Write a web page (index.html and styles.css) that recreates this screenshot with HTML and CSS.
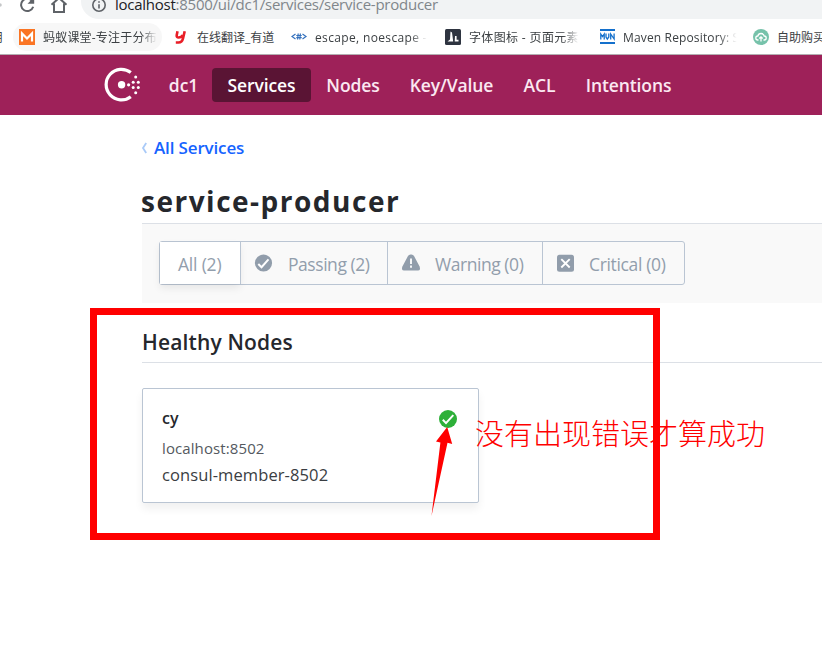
FILE: index.html
```html
<!DOCTYPE html>
<html lang="zh-CN">
<head>
<meta charset="utf-8">
<title>service-producer - Consul</title>
<link rel="stylesheet" href="styles.css">
</head>
<body>
<div class="toolbar">
  <svg class="tool-icons" width="81" height="19" viewBox="0 0 81 19" fill="none" stroke="#5f6368" stroke-width="2">
    <circle cx="0" cy="5" r="1.8" fill="#c4c6c8" stroke="none"/>
    <path d="M32.3 1.2A6.2 6.2 0 1 0 33.2 6.8"/><path d="M27.5 3.7h6.7V-3z" fill="#5f6368" stroke="none"/>
    <path d="M51.500 4.700L59-2l7.500 6.700M54 3.500V12h10V3.500"/>
  </svg>
  <div class="address">
    <svg width="14" height="19" viewBox="0 0 14 19" fill="none" stroke="#5f6368" stroke-width="1.600"><circle cx="7" cy="5" r="6.200"/><path d="M7 4.200V8.500M7 1.200V2.800"/></svg>
    <div class="url"><span class="host">localhost</span><span>:8500/ui/dc1/services/service-producer</span></div>
  </div>
</div>
<div class="bookmarks">
  <div class="bm edge"><span>用</span></div>
  <div class="bm ant">
    <svg width="16" height="16" viewBox="0 0 16 16"><path fill="#fa7524" d="M0 0h16v16H0z"/><path d="M3 12.500V4.500L8 9.500l5-5v8" fill="none" stroke="#fff" stroke-width="2.200"/></svg>
    <span class="fade">蚂蚁课堂-专注于分布</span>
  </div>
  <div class="bm youdao">
    <svg width="12" height="14" viewBox="0 0 12 14" fill="none" stroke="#e91e27" stroke-width="2.600"><path d="M2.500 1.300L1.700 5.300q-.2 2.200 1.800 2.200 3.200 0 4.300-2.500M9.700 1.300L8 8.500q-.9 4-4.500 4H.8"/></svg>
    <span>在线翻译_有道</span>
  </div>
  <div class="bm escape">
    <svg width="16" height="16" viewBox="0 0 16 16" fill="none" stroke="#3471bd" stroke-width="1.200"><path d="M4.500 5L1 7.500l3.500 2.500M11.500 5l3.500 2.500-3.500 2.500M7.200 4.500l-.6 6M9.400 4.500l-.6 6M5.300 6.500h5.400M5.300 8.700h5.400"/></svg>
    <span class="fade">escape, noescape -</span>
  </div>
  <div class="bm font">
    <svg width="16" height="16" viewBox="0 0 16 16"><rect width="16" height="16" rx="1.500" fill="#2e3440"/><path fill="#fff" d="M5.500 2.500L7 3.500l1.200 9H2.500L5 10.500zM10 7h1.600v3.500l1.700 2H9.700zM12 10.800h1.500v1.700H12z"/></svg>
    <span class="fade">字体图标 - 页面元素</span>
  </div>
  <div class="bm maven">
    <svg width="15" height="15" viewBox="0 0 15 15" fill="none" stroke="#1470cc"><path stroke-width="2" d="M0 1h15M0 14h15"/><path stroke-width="1.300" d="M.8 10.500V5l1.700 2.500L4.200 5v5.500M6 4.500v3.500l1.300 2L8.800 8V4.500M10.700 10.500V5l3.400 5V4.500"/></svg>
    <span class="fade">Maven Repository: S</span>
  </div>
  <div class="bm cloud">
    <svg width="16" height="16" viewBox="0 0 16 16"><circle cx="8" cy="8" r="8" fill="#76c2aa"/><path d="M5.500 11H4.800A2 2 0 0 1 4.800 7a3.300 3.300 0 0 1 6.400 0 2 2 0 0 1 0 4h-.7M8 12.500V8M6.300 9.500l1.700-1.700 1.700 1.700" fill="none" stroke="#fff" stroke-width="1.300"/></svg>
    <span>自助购买</span>
  </div>
</div>
<header class="header">
  <svg class="logo" width="36" height="36" viewBox="0 0 36 36" fill="#fff">
    <path d="M25.800 29.700A15.300 15.300 0 1 1 25.800 5.500" fill="none" stroke="#fff" stroke-width="3.200"/>
    <circle cx="16.600" cy="17.800" r="3.700"/><circle cx="23.600" cy="17.800" r="1.600"/><circle cx="28.200" cy="15.200" r="1.500"/><circle cx="28.200" cy="20.500" r="1.500"/><circle cx="33.300" cy="15.200" r="1.500"/><circle cx="33.300" cy="20.500" r="1.500"/><circle cx="30.700" cy="9.900" r="1.500"/><circle cx="30.700" cy="25.800" r="1.500"/>
  </svg>
  <nav class="nav">
    <a class="n-dc"><span>dc1</span></a><a class="n-services active"><span>Services</span></a><a class="n-nodes"><span>Nodes</span></a><a class="n-kv"><span>Key/Value</span></a><a class="n-acl"><span>ACL</span></a><a class="n-int"><span>Intentions</span></a>
  </nav>
</header>
<main>
  <div class="back"><svg width="7" height="12" viewBox="0 0 7 12" fill="none" stroke="#a9caf8" stroke-width="1.800"><path d="M5.200 1L2 6l3.200 5"/></svg><a>All Services</a></div>
  <h1><span>service-producer</span></h1>
  <div class="filters">
    <div class="group">
      <div class="f all"><span>All (2)</span></div>
      <div class="f passing"><svg width="18" height="18" viewBox="0 0 18 18"><circle cx="8.500" cy="9" r="8.600" fill="#919dab"/><path d="M3.300 10l3.200 3.200L13.500 5.300" fill="none" stroke="#fff" stroke-width="2"/></svg><span>Passing (2)</span></div>
      <div class="f warning"><svg width="18" height="18" viewBox="0 0 18 18"><path d="M6 2Q6.800 .5 8.500 .5h1q1.700 0 2.500 1.500l5.600 10.500Q19 16.500 16 16.500H2Q-1 16.500 .4 12.500z" fill="#919dab"/><path d="M9 4.500V10M9 11.500v2.200" stroke="#fff" stroke-width="1.800"/></svg><span>Warning (0)</span></div>
      <div class="f critical"><svg width="18" height="18" viewBox="0 0 18 18"><rect y=".8" width="17" height="17" rx="2.500" fill="#919dab"/><path d="M4.300 5.100l8.400 8.400M12.700 5.100l-8.400 8.400" stroke="#fff" stroke-width="1.900"/></svg><span>Critical (0)</span></div>
    </div>
  </div>
  <h2><span>Healthy Nodes</span></h2>
  <article class="card">
    <div class="info">
      <strong><span>cy</span></strong>
      <div class="host-line"><span>localhost:8502</span></div>
      <div class="member"><span>consul-member-8502</span></div>
    </div>
    <svg width="18" height="18" viewBox="0 0 18 18"><circle cx="9" cy="9" r="9" fill="#2eb039"/><path d="M3.800 9.800l3.200 3.300 7.300-8" fill="none" stroke="#fff" stroke-width="2"/></svg>
  </article>
</main>
<div class="mark-box"></div>
<svg class="mark-arrow" width="22" height="90" viewBox="0 0 22 90"><path fill="#f00" d="M16.200 0L21.200 17l-4.700-1.200L.5 89 9.400 15.500 5 14.500z"/></svg>
<div class="mark-text">没有出现错误才算成功</div>
</body>
</html>
```
FILE: styles.css
```css
* { box-sizing: border-box; }
body { margin: 0; width: 822px; height: 649px; overflow: hidden; background: #fff; color: #25272c; font-family: "Open Sans", "Noto Sans", "Noto Sans CJK SC", sans-serif; }
svg { flex: none; overflow: visible; }
span { white-space: nowrap; }

.toolbar { display: flex; height: 19px; overflow: hidden; }
.tool-icons { overflow: hidden; }
.address { display: flex; flex: 1; gap: 9px; padding-left: 11px; height: 19px; background: #f1f3f4; border-bottom-left-radius: 18px; }
.url { height: 20px; margin-top: -6px; line-height: 21px; font-size: 15px; color: #80868b; letter-spacing: -.25px; white-space: nowrap; }
.host { color: #202124; }

.bookmarks { display: flex; align-items: center; height: 36px; border-bottom: 1px solid #b3aeb1; font-size: 12px; color: #3c4043; overflow: hidden; }
.bm { display: flex; align-items: center; flex: none; height: 28px; overflow: hidden; }
.bm span { padding-top: 1px; }
.fade { -webkit-mask-image: linear-gradient(90deg, #000 85%, transparent); mask-image: linear-gradient(90deg, #000 85%, transparent); }
.edge { width: 3px; margin-right: 10px; justify-content: flex-end; }
.ant { width: 149px; padding-left: 6px; gap: 8px; border-radius: 14px; background: #f7f7f7; }
.ant span { letter-spacing: .2px; }
.youdao { width: 129px; padding-left: 13px; gap: 10px; }
.escape { width: 154px; gap: 8px; }
.escape span { letter-spacing: .35px; }
.font { width: 154px; gap: 8px; }
.font span { letter-spacing: .35px; }
.maven { width: 154px; padding-left: 1px; gap: 8px; }
.maven span { letter-spacing: .15px; }
.maven .fade { -webkit-mask-image: linear-gradient(90deg, #000 82%, transparent 98%); mask-image: linear-gradient(90deg, #000 82%, transparent 98%); }
.cloud { width: 80px; gap: 8px; }

.header { display: flex; align-items: center; height: 60px; padding-left: 105px; background: #9e2159; }
.logo { margin-right: 14px; }
.nav { display: flex; }
.nav a { display: flex; align-items: center; justify-content: center; height: 34px; border-radius: 4px; color: #fbe8f1; font-size: 17.5px; font-weight: 600; letter-spacing: -.1px; }
.nav .active { background: #5a1434; color: #fff; }
.n-dc { width: 57px; }
.n-services { width: 99px; }
.n-nodes { width: 84px; }
.n-kv { width: 113px; }
.n-acl { width: 63px; }
.n-int { width: 115px; }

main { padding-left: 141px; }
.back { display: flex; align-items: center; gap: 6px; height: 65px; color: #1563ff; font-size: 17px; font-weight: 600; letter-spacing: -.15px; }
h1 { height: 44px; margin: 0 0 0 1px; border-bottom: 1px solid #dce0e6; font-size: 28px; line-height: 43px; font-weight: 700; letter-spacing: 1.5px; }
h1 span { margin-left: -1px; }
.filters { height: 79px; margin-left: 1px; padding: 17px; background: #f9f9f9; }
.group { display: flex; width: 526px; height: 44px; border: 1px solid #bac5d3; border-radius: 3px; }
.f { display: flex; align-items: center; font-size: 17.5px; font-weight: 400; color: #929eac; border-left: 1px solid #bac5d3; padding-left: 14px; letter-spacing: -.45px; }
.f span { padding-top: 2px; }
.f svg { margin-right: 15px; }
.all { width: 80px; padding-left: 18px; border-left: 0; background: #fff; box-shadow: 0 4px 8px rgba(0,0,0,.08); letter-spacing: -.2px; }
.passing { width: 147px; }
.warning { width: 155px; }
.critical { width: 142px; letter-spacing: -.35px; }
.critical svg { margin-right: 14px; }
h2 { height: 60px; margin: 0 0 25px 1px; padding-top: 17px; border-bottom: 1px solid #dce0e6; font-size: 21px; line-height: 44px; font-weight: 600; letter-spacing: .15px; }
.card { display: flex; justify-content: space-between; width: 337px; height: 115px; margin-left: 1px; padding: 21px 21px 0 19px; border: 1px solid #bac5d3; border-radius: 2px; box-shadow: 0 6px 8px rgba(0,0,0,.06); }
.info { display: flex; flex-direction: column; }
.info strong { height: 26px; line-height: 16px; font-size: 16px; font-weight: 600; }
.host-line { height: 26px; line-height: 24px; font-size: 15px; color: #545960; letter-spacing: .1px; }
.member { height: 26px; line-height: 26px; font-size: 16.5px; color: #3a3d42; letter-spacing: .1px; }

.mark-box { position: absolute; left: 90px; top: 308px; width: 570px; height: 232px; border: 7px solid #f00; }
.mark-arrow { position: absolute; left: 431px; top: 427px; }
.mark-text { position: absolute; left: 475px; top: 412px; font: 300 29px/40px "Noto Sans CJK SC", sans-serif; color: #f00; white-space: nowrap; }
```
